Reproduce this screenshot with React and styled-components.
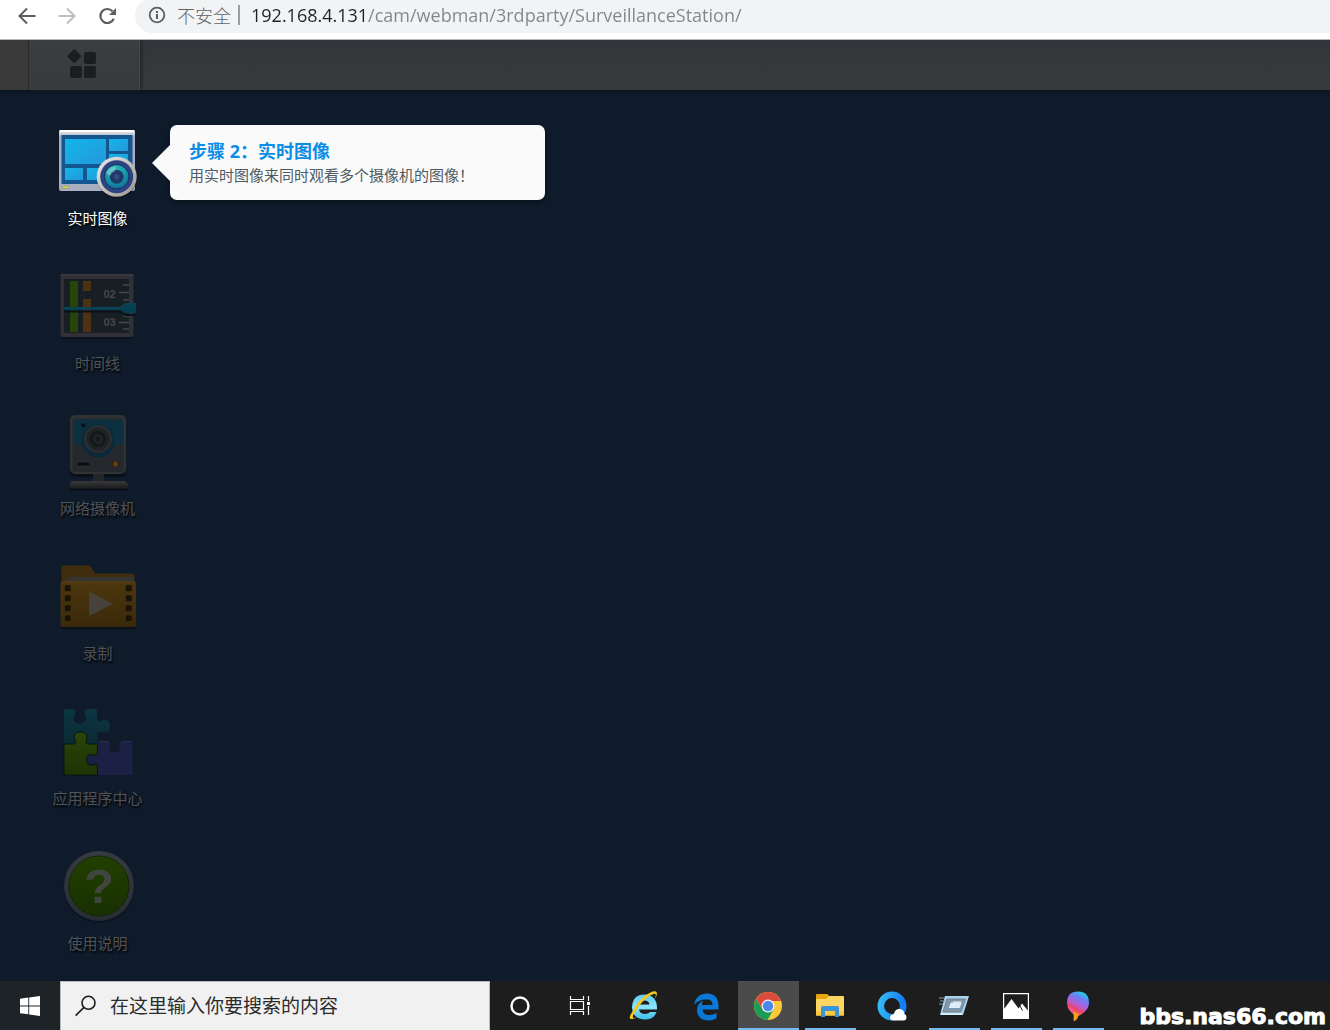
import React, { useState } from "react";
import styled, { createGlobalStyle } from "styled-components";

const apps = [
  { id: "live", name: "实时图像", Icon: LiveIcon },
  { id: "timeline", name: "时间线", Icon: TimelineIcon },
  { id: "camera", name: "网络摄像机", Icon: CameraIcon },
  { id: "recording", name: "录制", Icon: RecordingIcon },
  { id: "center", name: "应用程序中心", Icon: PuzzleIcon },
  { id: "help", name: "使用说明", Icon: HelpIcon },
];

const tasks = [
  { name: "Internet Explorer", Icon: IeIcon },
  { name: "Edge", Icon: EdgeIcon },
  { name: "Chrome", Icon: ChromeIcon, open: true, active: true },
  { name: "Explorer", Icon: FolderIcon, open: true },
  { name: "QQ Browser", Icon: QqIcon },
  { name: "Run", Icon: RunIcon, open: true },
  { name: "Photos", Icon: PhotosIcon, open: true },
  { name: "Paint 3D", Icon: PaintIcon, open: true },
];

function App() {
  const [url, setUrl] = useState("192.168.4.131/cam/webman/3rdparty/SurveillanceStation/");
  const [query, setQuery] = useState("");

  return (
    <Page>
      <GlobalStyle />
      <BrowserBar>
        <NavButton aria-label="Back">
          <svg width="20" height="20" viewBox="0 0 20 20" fill="none" stroke="#5a5e63" strokeWidth="2">
            <path d="M18.500 10H3M10 2.500L2.500 10l7.500 7.500" />
          </svg>
        </NavButton>
        <NavButton aria-label="Forward" disabled>
          <svg width="20" height="20" viewBox="0 0 20 20" fill="none" stroke="#bcbec1" strokeWidth="2">
            <path d="M1.500 10H17M10 2.500l7.500 7.500-7.500 7.500" />
          </svg>
        </NavButton>
        <NavButton aria-label="Reload">
          <svg width="20" height="20" viewBox="0 0 20 20" fill="none" stroke="#5a5e63" strokeWidth="2.200">
            <path d="M16.800 12.800A7 7 0 1 1 15.500 5.200" />
            <path d="M19 2v7h-7z" fill="#5a5e63" stroke="none" />
          </svg>
        </NavButton>
        <Omnibox>
          <svg width="18" height="18" viewBox="0 0 18 18">
            <circle cx="9" cy="9" r="7.300" fill="none" stroke="#5a5e63" strokeWidth="1.800" />
            <path d="M8 8h2v5H8zM8 5h2v2H8z" fill="#5a5e63" />
          </svg>
          <Security>不安全</Security>
          <Divider />
          <UrlInput aria-label="URL" value={url} onChange={(e) => setUrl(e.target.value)} />
        </Omnibox>
      </BrowserBar>

      <TopBar>
        <TopEdge />
        <MenuButton aria-label="Main menu">
          <svg width="30" height="30" viewBox="0 0 30 30" fill="#1a1e21">
            <rect x="3" y="2" width="10.500" height="10.500" rx="1.500" transform="rotate(45 8.250 7.250)" />
            <rect x="18" y="3" width="12" height="12" rx="2" />
            <rect x="4" y="17" width="12" height="12" rx="2" />
            <rect x="18" y="17" width="12" height="12" rx="2" />
          </svg>
        </MenuButton>
      </TopBar>

      <Desktop>
        {apps.map(({ id, name, Icon }) => (
          <AppItem key={id}>
            <AppButton $lit={id === "live"}>
              <Icon />
              <span>{name}</span>
            </AppButton>
            {id === "live" && (
              <Tip role="tooltip">
                <TipTitle>步骤 2：实时图像</TipTitle>
                <TipText>用实时图像来同时观看多个摄像机的图像！</TipText>
              </Tip>
            )}
          </AppItem>
        ))}
      </Desktop>

      <Taskbar>
        <SystemButton $start aria-label="Start">
          <svg width="20" height="20" viewBox="0 0 20 20" fill="#fff">
            <path d="M0 2.800l8.300-1.200v7.900H0zM9.200 1.500L20 0v9.500H9.200zM0 10.400h8.300v7.900L0 17.200zM9.200 10.400H20V20L9.200 18.500z" />
          </svg>
        </SystemButton>
        <SearchBox>
          <svg width="22" height="22" viewBox="0 0 22 22" fill="none" stroke="#1c1c1c" strokeWidth="1.600">
            <circle cx="13.500" cy="7.800" r="6.500" />
            <path d="M9 12.400L.600 20.600" />
          </svg>
          <input
            aria-label="搜索"
            placeholder="在这里输入你要搜索的内容"
            value={query}
            onChange={(e) => setQuery(e.target.value)}
          />
        </SearchBox>
        <SystemButton aria-label="Cortana">
          <svg width="22" height="22" viewBox="0 0 22 22">
            <circle cx="11" cy="11" r="8.500" fill="none" stroke="#fff" strokeWidth="2.400" />
          </svg>
        </SystemButton>
        <SystemButton aria-label="Task view">
          <svg width="22" height="22" viewBox="0 0 22 22" fill="none" stroke="#fff">
            <path d="M1.500 1v3.500h13V1M1.500 20v-3.500h13V20M1.500 6.500h13v8h-13zM19.500 1v5M19.500 11v9" strokeWidth="1.200" />
            <path d="M18 7h3v3h-3z" fill="#fff" stroke="none" />
          </svg>
        </SystemButton>
        <TaskList>
          {tasks.map(({ name, Icon, open, active }) => (
            <TaskButton key={name} aria-label={name} $open={open} $active={active}>
              <Icon />
            </TaskButton>
          ))}
        </TaskList>
        <Watermark>bbs.nas66.com</Watermark>
      </Taskbar>
    </Page>
  );
}

export default App;

/* desktop icons */

function LiveIcon() {
  return (
    <svg width="80" height="80" viewBox="0 0 80 80">
      <defs>
        <linearGradient id="liveFrame" x1="0" y1="0" x2="0" y2="1">
          <stop offset="0" stopColor="#f2f2f4" />
          <stop offset=".12" stopColor="#a5adbd" />
          <stop offset="1" stopColor="#a9aec0" />
        </linearGradient>
        <linearGradient id="liveTile" x1="0" y1="0" x2="1" y2="1">
          <stop offset="0" stopColor="#12b6e8" />
          <stop offset="1" stopColor="#2597dc" />
        </linearGradient>
        <linearGradient id="lensRing" x1="0" y1="0" x2="1" y2="1">
          <stop offset="0" stopColor="#efede8" />
          <stop offset="1" stopColor="#97948e" />
        </linearGradient>
        <radialGradient id="lensGlass" cx=".45" cy=".3" r=".7">
          <stop offset="0" stopColor="#35c4c4" />
          <stop offset=".6" stopColor="#1795a8" />
          <stop offset="1" stopColor="#146a96" />
        </radialGradient>
      </defs>
      <rect x="1" y="7" width="76" height="61" rx="2" fill="url(#liveFrame)" />
      <rect x="1.500" y="7" width="75" height="2" rx="1" fill="#fff" />
      <rect x="3.500" y="12" width="71" height="49" fill="#14568f" />
      <g fill="url(#liveTile)">
        <rect x="7" y="16" width="41" height="25" />
        <rect x="51" y="16" width="19" height="12" />
        <rect x="51" y="31" width="19" height="12" />
        <rect x="7" y="45" width="18" height="12" />
        <rect x="29" y="45" width="18" height="12" />
      </g>
      <rect x="4" y="63" width="7" height="2.500" fill="#d0dc3c" stroke="#828998" strokeWidth=".6" />
      <circle cx="59" cy="55" r="20" fill="#000" opacity=".35" />
      <circle cx="58.700" cy="53.700" r="20" fill="url(#lensRing)" />
      <circle cx="58.700" cy="53.700" r="16.500" fill="#2c4484" />
      <circle cx="58.700" cy="53.700" r="12.300" fill="url(#lensGlass)" stroke="#15305c" strokeWidth="1" />
      <circle cx="58.700" cy="53.700" r="7" fill="#1e3a6b" />
      <circle cx="58.700" cy="53.700" r="2.500" fill="#35507f" />
      <path d="M48 50a12 12 0 0 1 10-7l-1 5a8 8 0 0 0-5 5z" fill="#9ee2dc" opacity=".5" />
    </svg>
  );
}

function TimelineIcon() {
  return (
    <svg width="80" height="80" viewBox="0 0 80 80">
      <rect x="2.500" y="7" width="73" height="64" rx="3" fill="#0a121e" />
      <rect x="2.500" y="6" width="73" height="63" rx="2" fill="#303036" />
      <rect x="2.500" y="6" width="73" height="1.500" fill="#3b3b40" />
      <rect x="6" y="11" width="65" height="54" fill="#181f24" />
      <rect x="12" y="13" width="8" height="51" fill="#29440b" />
      <rect x="25" y="13" width="8" height="10" fill="#4e3013" />
      <rect x="25" y="31" width="8" height="33" fill="#4e3013" />
      <path d="M65 17h6M61 24.500h10M65 32h6M65 48h6M61 54.500h10M65 61h6" stroke="#45494b" strokeWidth="1.300" />
      <g fill="#45494b" fontFamily="Liberation Sans, sans-serif" fontSize="11" fontWeight="700">
        <text x="45.500" y="30">02</text>
        <text x="45.500" y="58">03</text>
      </g>
      <path d="M6 43.500h56l5 3.500h11" stroke="#0b1118" strokeWidth="2" fill="none" />
      <path d="M6 39h56l5-4h11v10H67l-5-3H6z" fill="#063f50" />
      <path d="M6 40h56l5-4h11" stroke="#0a4a5c" fill="none" />
    </svg>
  );
}

function CameraIcon() {
  return (
    <svg width="80" height="80" viewBox="0 0 80 80">
      <defs>
        <linearGradient id="camBase" x1="0" y1="0" x2="0" y2="1">
          <stop offset="0" stopColor="#39393b" />
          <stop offset="1" stopColor="#1b1c1e" />
        </linearGradient>
      </defs>
      <rect x="12" y="4" width="56" height="60" rx="5" fill="#090f18" />
      <rect x="35" y="60" width="11" height="9" fill="#242527" />
      <path d="M13 69h54l3 3v4.500q0 1-1 1H13q-1 0-1-1V72z" fill="#0a0e15" />
      <path d="M13 68h54l3 3v4.500H12V71z" fill="url(#camBase)" />
      <rect x="12" y="2" width="56" height="59" rx="5" fill="#313234" />
      <rect x="14.500" y="5.500" width="51" height="53.500" rx="2" fill="#25282c" />
      <path d="M15 6.500h50V32H15z" fill="#0c3040" />
      <circle cx="40" cy="28" r="16.500" fill="#0b293a" />
      <circle cx="40" cy="26" r="14" fill="#2c2f32" />
      <circle cx="40" cy="26" r="11.500" fill="#202326" />
      <circle cx="40" cy="26" r="8" fill="#14181b" />
      <circle cx="40" cy="26" r="5" fill="#222527" />
      <circle cx="40" cy="26" r="2.500" fill="#15181b" />
      <circle cx="25.500" cy="12.500" r="2" fill="#081016" />
      <rect x="19" y="49" width="13" height="4" rx="1.500" fill="#0c0e11" stroke="#333" strokeWidth=".8" />
      <circle cx="57.500" cy="51" r="3.500" fill="#5e3b0c" stroke="#1d1b19" />
    </svg>
  );
}

function RecordingIcon() {
  const holes = [27, 37, 47, 57];
  return (
    <svg width="80" height="80" viewBox="0 0 80 80">
      <defs>
        <linearGradient id="recFront" x1="0" y1="0" x2="0" y2="1">
          <stop offset="0" stopColor="#4c360d" />
          <stop offset="1" stopColor="#3a290a" />
        </linearGradient>
      </defs>
      <rect x="3" y="26" width="75" height="45" rx="2" fill="#0a111b" />
      <path d="M3.500 26V9.500q0-2 2-2h25q3 0 4 4 2 4 5 4h35q2 0 2 2V26z" fill="#3f2d0d" />
      <path d="M7 24l3-5h66v5z" fill="#353431" />
      <rect x="2.500" y="23.500" width="75.500" height="45.500" rx="2" fill="url(#recFront)" />
      <rect x="3.500" y="23.500" width="73.500" height="1" fill="#5c421a" />
      {holes.map((y) => (
        <g key={y} fill="#181307" stroke="#4b3410" strokeWidth=".6">
          <rect x="6.500" y={y} width="6.500" height="6.500" />
          <rect x="67.500" y={y} width="6.500" height="6.500" />
        </g>
      ))}
      <path d="M31 33.500L55 45.700 31 58z" fill="#47423c" />
    </svg>
  );
}

function PuzzleIcon() {
  return (
    <svg width="80" height="80" viewBox="0 0 80 80">
      <defs>
        <linearGradient id="pzGreen" x1="0" y1="0" x2="0" y2="1">
          <stop offset="0" stopColor="#2b450a" />
          <stop offset="1" stopColor="#1c3404" />
        </linearGradient>
        <linearGradient id="pzTeal" x1="0" y1="0" x2="0" y2="1">
          <stop offset="0" stopColor="#0b3641" />
          <stop offset="1" stopColor="#0a2b36" />
        </linearGradient>
      </defs>
      <path d="M6 8q0-2 2-2h7q4 0 2 5-3 6 0 8 5 4 9 0 4-3 1-8-2-5 2-5h8q2 0 2 3v7q0 4 5 1.500 8-3 8 5.500t-8 6q-5-2-5 2v9.500H6z" fill="url(#pzTeal)" />
      <path d="M39.500 39q0-1 2-1h7q5 0 3.500 5-2 6 4.500 6t5-6q-1.500-5 3-5h8q2 0 2 2v32h-35V61q0-2-5 0-6 2-6-4.500t6-5.500q5 2 5-2z" fill="#1b2044" />
      <path d="M50 38.500h-8M64 38.500h9" stroke="#283048" />
      <path d="M6 41h9q4 0 2-4-3-8 5.500-8t6 8q-2 4 2 4h9v9q0 3-4 2-7-2-7 4.500t7 5.500q4-2 4 2v8H6z" fill="url(#pzGreen)" stroke="#0a150e" strokeWidth="1" />
    </svg>
  );
}

function HelpIcon() {
  return (
    <svg width="80" height="80" viewBox="0 0 80 80">
      <defs>
        <linearGradient id="helpFill" x1="0" y1="0" x2="0" y2="1">
          <stop offset="0" stopColor="#224000" />
          <stop offset="1" stopColor="#182f02" />
        </linearGradient>
        <linearGradient id="helpRing" x1="0" y1="0" x2="0" y2="1">
          <stop offset="0" stopColor="#363b41" />
          <stop offset="1" stopColor="#262c33" />
        </linearGradient>
      </defs>
      <circle cx="41" cy="39.500" r="35.500" fill="#0a1320" />
      <circle cx="41" cy="38" r="35" fill="url(#helpRing)" />
      <circle cx="41" cy="38" r="30" fill="url(#helpFill)" stroke="#142604" />
      <text x="41" y="55" textAnchor="middle" fontFamily="Liberation Sans, sans-serif" fontWeight="700" fontSize="49" fill="#40453e">?</text>
    </svg>
  );
}

/* taskbar icons */

function IeIcon() {
  return (
    <svg width="30" height="30" viewBox="1 0 30 30">
      <defs>
        <linearGradient id="ieBlue" x1="0" y1="0" x2="0" y2="1">
          <stop offset="0" stopColor="#5fc9f3" />
          <stop offset=".5" stopColor="#8be5fc" />
          <stop offset="1" stopColor="#3dbbe9" />
        </linearGradient>
      </defs>
      <path d="M11 13.500h10.500q-.5-4-5.500-4t-5 4zM29 18.500H11q1 4.500 6 4.500 3.500 0 5-2h6.500q-2.500 7.500-11.500 7.500Q4.500 28 4 16.500 4.500 3.500 16.500 3.500 29.500 4 29 18.500z" fill="url(#ieBlue)" fillRule="evenodd" />
      <path d="M5.500 19Q-.500 27.500 3 28q3 .5 8-3-5 3-6 1.500-.8-1.500 2.500-6Q13 11 20.500 5.500q6-3.500 7-2.500 1 1-1 5.500 4-6 1.500-8Q25-1 16.500 5 9 11.500 5.500 19z" fill="#f5c71d" />
    </svg>
  );
}

function EdgeIcon() {
  return (
    <svg width="30" height="30" viewBox="0 0 30 30">
      <path d="M3 14Q5 2.500 16.500 2.500 27.500 3 27.500 15v3.500H11.500q.5 5.500 7 5.500 4 0 7-2v5.500q-3.500 2-8.500 2Q6.500 29 6 19q0-6 6-9.500-1 1.500-1 4.500h10.500q0-5.500-5.500-5.500Q8 8 3 14z" fill="#0a78d6" />
    </svg>
  );
}

function ChromeIcon() {
  return (
    <svg width="30" height="30" viewBox="0 0 30 30">
      <circle cx="15" cy="15" r="14" fill="#fbc93c" />
      <path d="M2.900 8A14 14 0 0 1 27.100 8L28 10H15L9 17.500z" fill="#dc4c3e" />
      <path d="M2.900 8A14 14 0 0 0 14.500 29l6-10.500-9.900 1.500z" fill="#1c9c58" />
      <circle cx="15" cy="15" r="6.500" fill="#f4f4f4" />
      <circle cx="15" cy="15" r="5.200" fill="#4a87ee" />
    </svg>
  );
}

function FolderIcon() {
  return (
    <svg width="30" height="30" viewBox="0 0 30 30">
      <path d="M1 4q0-1 1-1h10q1 0 2 2h13q2 0 2 1v18H1z" fill="#e9a50c" />
      <path d="M1 8h10l3-3h13.500q1.500 0 1.500 1v18.500H1z" fill="#fdd563" />
      <path d="M1 20h28v4.500H1z" fill="#fac93c" />
      <path d="M6 26V17q0-2 2-2h14q2 0 2 2v9h-4v-6h-10v6z" fill="#3b93d8" />
    </svg>
  );
}

function QqIcon() {
  return (
    <svg width="30" height="30" viewBox="0 0 30 30">
      <defs>
        <linearGradient id="qqRing" x1="0" y1="0" x2="1" y2=".2">
          <stop offset="0" stopColor="#35b9f5" />
          <stop offset="1" stopColor="#167df2" />
        </linearGradient>
      </defs>
      <circle cx="15" cy="15" r="11.200" fill="none" stroke="url(#qqRing)" strokeWidth="6.600" />
      <path d="M16.500 29.500q-3.500 0-3.500-3 0-3 4-3.500 1-5.500 6-5 4 .5 4.500 5 2 1 2 3 0 3.500-3 3.500z" fill="#fff" />
    </svg>
  );
}

function RunIcon() {
  return (
    <svg width="30" height="30" viewBox="0 0 30 30">
      <path d="M6 5h24L24 24H1z" fill="#a9d3ef" />
      <path d="M8 8h18.500L22 21H4z" fill="#8796a3" stroke="#6c8496" />
      <path d="M11.500 11h12L21 17.500H9z" fill="#dfedf8" stroke="#6d9bc0" />
      <path d="M14 10.500h8v1h-8z" fill="#fff" />
      <path d="M0 7h6M1 10h5M0 13h4" stroke="#7da3bd" strokeWidth="1" />
      <path d="M2 23h21" stroke="#e4f4fd" strokeWidth="1.500" />
    </svg>
  );
}

function PhotosIcon() {
  return (
    <svg width="30" height="30" viewBox="0 0 30 30">
      <path d="M2 2h26v26H2zM3.200 3.200v14.500L10.500 8l7 9.500 3.500-5 5.800 7V3.200z" fill="#fff" fillRule="evenodd" />
      <path d="M18.500 14l3 5.500" stroke="#1d1d1d" strokeWidth="1" />
    </svg>
  );
}

function PaintIcon() {
  return (
    <svg width="30" height="30" viewBox="0 0 30 30">
      <defs>
        <linearGradient id="paintBody" x1=".8" y1="0" x2=".35" y2="1">
          <stop offset="0" stopColor="#10e0e4" />
          <stop offset=".3" stopColor="#6f7df5" />
          <stop offset=".55" stopColor="#b45fd6" />
          <stop offset=".75" stopColor="#ef4268" />
          <stop offset="1" stopColor="#f1a51c" />
        </linearGradient>
      </defs>
      <path d="M4 12Q4 .5 15 .5T26 12q0 5-5 9.500-3 2.500-7 4Q4 20 4 12z" fill="url(#paintBody)" />
      <path d="M5 16q6-1 6 7l-.5 7q4-.5 4.500-5Q8 23 5 16z" fill="#f2558b" />
      <path d="M10.500 21q4 1 5 3-1 5-4.500 6z" fill="#f0a31d" />
    </svg>
  );
}

/* styles */

const GlobalStyle = createGlobalStyle`
  * {
    box-sizing: border-box;
  }
  body {
    margin: 0;
    font-family: "Open Sans", "Noto Sans CJK SC", sans-serif;
  }
  button {
    border: 0;
    padding: 0;
    background: none;
    font: inherit;
    cursor: pointer;
  }
  input {
    border: 0;
    padding: 0;
    outline: 0;
    background: none;
    font: inherit;
    min-width: 0;
  }
  svg {
    display: block;
    flex: none;
  }
`;

const Page = styled.div`
  display: flex;
  flex-direction: column;
  min-height: 100vh;
  background: #0f1b2b;
`;

const BrowserBar = styled.header`
  display: flex;
  align-items: flex-end;
  height: 40px;
  padding: 0 0 6px 7px;
  overflow: hidden;
  background: #fff;
  border-bottom: 1px solid #b4b6b8;
`;

const NavButton = styled.button`
  display: flex;
  align-items: center;
  justify-content: center;
  width: 40px;
  height: 35px;
`;

const Omnibox = styled.div`
  display: flex;
  align-items: center;
  flex: 1;
  height: 35px;
  margin-left: 8px;
  padding: 0 0 2px 13px;
  background: #f1f3f4;
  border-radius: 18px 0 0 18px;
  font-size: 18px;
`;

const Security = styled.span`
  margin-left: 11px;
  font-weight: 300;
  color: #5f6368;
`;

const Divider = styled.span`
  width: 2px;
  height: 20px;
  margin: 0 11px 0 7px;
  background: #9a9da1;
`;

/* host part is dark, the rest of the address is grey */
const UrlInput = styled.input`
  flex: 1;
  height: 30px;
  color: #80868b;
  background: linear-gradient(to right, #202124 116px, #80868b 116px);
  -webkit-background-clip: text;
  background-clip: text;
  -webkit-text-fill-color: transparent;
`;

const TopBar = styled.nav`
  display: flex;
  height: 50px;
  background: linear-gradient(#33363a, #38393a);
  box-shadow: 0 1px 4px #0a1118;
  clip-path: inset(0 0 -5px 0);
`;

const TopEdge = styled.div`
  width: 29px;
  background: #3a3a3b;
  border-right: 1px solid #28292a;
`;

const MenuButton = styled.button`
  display: flex;
  align-items: center;
  justify-content: center;
  width: 111px;
  padding: 0 6px 2px 0;
  background: linear-gradient(#3c3d3e, #393a3d);
  border-right: 1px solid #46484a;
  box-shadow: 2px 0 3px #232628;
`;

const Desktop = styled.main`
  display: flex;
  flex: 1;
  flex-direction: column;
  align-items: flex-start;
  gap: 40px;
  padding: 33px 38px 28px;
`;

const AppItem = styled.div`
  position: relative;
`;

const AppButton = styled.button`
  display: flex;
  flex-direction: column;
  align-items: center;
  gap: 5px;
  width: 120px;
  font-size: 15px;
  line-height: 20px;
  color: ${(p) => (p.$lit ? "#fff" : "#505357")};

  span {
    padding-right: 1px;
    text-shadow: 1px 2px 2px #000;
  }
`;

const Tip = styled.div`
  position: absolute;
  top: 2px;
  left: 132px;
  width: 375px;
  padding: 14px 19px 13px;
  background: #fafafa;
  border-radius: 7px;
  box-shadow: 0 2px 4px rgba(0, 0, 0, 0.4);

  &::before {
    content: "";
    position: absolute;
    top: 20px;
    left: -18px;
    border: 18px solid transparent;
    border-left: 0;
    border-right-color: #fafafa;
  }
`;

const TipTitle = styled.h2`
  margin: 0;
  font-size: 18px;
  line-height: 24px;
  color: #0a8de6;
`;

const TipText = styled.p`
  margin: 0;
  font-size: 15px;
  line-height: 24px;
  white-space: nowrap;
  color: #505a64;
`;

const Taskbar = styled.footer`
  display: flex;
  height: 49px;
  background: #1d1d1d;
`;

const SystemButton = styled.button`
  display: flex;
  align-items: center;
  justify-content: center;
  width: 60px;
  background: ${(p) => (p.$start ? "#1e2328" : "none")};
`;

const SearchBox = styled.label`
  display: flex;
  align-items: center;
  gap: 13px;
  width: 430px;
  padding-left: 14px;
  background: #f1f1f1;
  border: 1px solid #b9babc;
  border-bottom: 0;
  font-size: 19px;

  input {
    flex: 1;
    height: 30px;
    color: #2b2b2b;
  }
  input::placeholder {
    color: #2b2b2b;
    opacity: 1;
  }
`;

const TaskList = styled.div`
  display: flex;
  gap: 1px;
  margin-left: 4px;
`;

const TaskButton = styled.button`
  display: flex;
  align-items: center;
  justify-content: center;
  position: relative;
  width: 61px;
  padding-right: 2px;
  background: ${(p) => (p.$active ? "#4b4b4b" : "none")};

  &::after {
    content: "";
    display: ${(p) => (p.$open ? "block" : "none")};
    position: absolute;
    bottom: 0;
    left: ${(p) => (p.$active ? "0" : "5px")};
    right: ${(p) => (p.$active ? "0" : "5px")};
    height: 2px;
    background: #76b9ed;
  }
`;

const Watermark = styled.div`
  align-self: flex-end;
  margin-left: auto;
  padding: 0 4px 1px 0;
  font: 700 22px/24px "DejaVu Sans", sans-serif;
  color: #fff;
  -webkit-text-stroke: 1px #fff;
`;
